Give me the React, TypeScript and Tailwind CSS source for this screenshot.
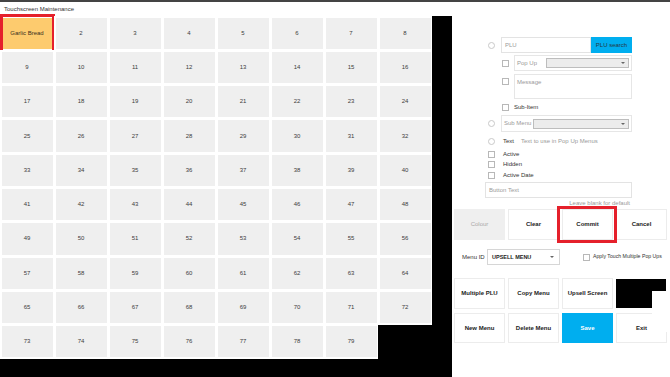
import React from "react";

const font = { fontFamily: '"Liberation Sans", Arial, sans-serif' };

function Check() {
  return <span className="block h-[7px] w-[7px] shrink-0 border border-[#b8b8b8] bg-white" />;
}

function Radio() {
  return <span className="block h-[7px] w-[7px] shrink-0 rounded-full border border-[#c9c9c9] bg-white" />;
}

function Arrow() {
  return <span className="block h-0 w-0 border-x-[2px] border-t-[2px] border-x-transparent border-t-[#666]" />;
}

function Select({ w }: { w: string }) {
  return (
    <div className={`flex h-[10px] items-center justify-end border border-[#bdbdbd] bg-[#ececec] pr-[3px] ${w}`}>
      <Arrow />
    </div>
  );
}

function Btn({ label, tone = "plain" }: { label: string; tone?: "plain" | "muted" | "blue" }) {
  const look =
    tone === "blue"
      ? "bg-[#00aeef] text-white border-[#00aeef]"
      : tone === "muted"
        ? "bg-[#efefef] text-[#a9a9a9] font-normal border-[#efefef]"
        : "bg-white text-[#222] border-[#ececec]";
  return (
    <div className={`flex h-full w-[51px] items-center justify-center whitespace-nowrap border-[1.5px] font-bold ${look}`}>
      {label}
    </div>
  );
}

export default function App() {
  const cells = Array.from({ length: 79 }, (_, i) => (i === 0 ? "Garlic Bread" : String(i + 1)));

  return (
    <div style={font} className="relative flex h-[377px] w-[670px] flex-col overflow-hidden bg-white text-[6px] text-[#333]">
      <div className="h-[2px] bg-[#444]" />
      <div className="flex h-[14px] items-center pl-[4px] text-[6px] text-[#333]">Touchscreen Maintenance</div>

      <div className="flex flex-1">
        {/* button grid */}
        <div className="w-[452px] shrink-0 bg-black">
          <div className="flex w-[432px] flex-wrap content-start">
            {cells.map((c, i) => (
              <div key={c} className="relative h-[34.3px] w-[54px] bg-white p-[1.5px]">
                <div
                  className={`flex h-full w-full items-center justify-center ${
                    i === 0 ? "bg-[#fdcb6e] text-[#3a3020]" : "bg-[#efefef] text-[#3c3c3c]"
                  }`}
                >
                  {c}
                </div>
                {i === 0 && (
                  <div className="absolute -bottom-[4px] -right-[1px] -top-[2px] left-0 border-[3px] border-[#e5202b]" />
                )}
              </div>
            ))}
          </div>
        </div>

        {/* editor panel */}
        <div className="flex min-w-0 flex-1 flex-col bg-white">
          <div className="mt-[21px] flex h-[16px] items-center pl-[36px]">
            <Radio />
            <div className="ml-[6px] flex h-full w-[90px] items-center border border-[#e3e3e3] pl-[3px] text-[#9a9a9a]">PLU</div>
            <div className="flex h-full w-[41px] items-center justify-center bg-[#00aeef] text-[#253844]">PLU search</div>
          </div>

          <div className="mt-[2px] flex h-[16px] items-center pl-[50px]">
            <Check />
            <div className="ml-[5px] flex h-full w-[118px] items-center border border-[#e6e6e6] pl-[2px]">
              <span className="w-[29px] text-[#9a9a9a]">Pop Up</span>
              <Select w="w-[83px]" />
            </div>
          </div>

          <div className="mt-[3px] flex h-[25px] items-start pl-[50px]">
            <span className="mt-[4px]">
              <Check />
            </span>
            <div className="ml-[5px] h-full w-[118px] border border-[#e6e6e6] pl-[2px] pt-[3px] text-[#9a9a9a]">Message</div>
          </div>

          <div className="mt-[4px] flex h-[8px] items-center pl-[50px]">
            <Check />
            <span className="ml-[5px]">Sub-Item</span>
          </div>

          <div className="mt-[4px] flex h-[17px] items-center pl-[36px]">
            <Radio />
            <div className="ml-[6px] flex h-full w-[131px] items-center border border-[#e6e6e6] pl-[2px]">
              <span className="w-[29px] text-[#9a9a9a]">Sub Menu</span>
              <Select w="w-[96px]" />
            </div>
          </div>

          <div className="mt-[5px] flex h-[8px] items-center pl-[36px]">
            <Radio />
            <span className="ml-[8px]">Text</span>
            <span className="ml-[7px] text-[#9a9a9a]">Text to use in Pop Up Menus</span>
          </div>

          {["Active", "Hidden", "Active Date"].map((l, i) => (
            <div key={l} className={`flex h-[8px] items-center pl-[36px] ${i === 0 ? "mt-[5px]" : "mt-[2.7px]"}`}>
              <Check />
              <span className="ml-[8px]">{l}</span>
            </div>
          ))}

          <div className="ml-[33px] mt-[3px] flex h-[16px] w-[147px] items-center border border-[#e3e3e3] pl-[3px] text-[#9a9a9a]">
            Button Text
          </div>

          <div className="mt-[1px] flex h-[8px] items-center justify-end pr-[40px] text-[#9a9a9a]">Leave blank for default</div>

          <div className="mt-[2px] flex h-[31px] gap-[3px] pl-[2px]">
            <Btn label="Colour" tone="muted" />
            <Btn label="Clear" />
            <div className="relative h-full">
              <Btn label="Commit" />
              <div className="absolute -bottom-[3px] -left-[5px] -right-[4px] -top-[3px] border-[3px] border-[#e5202b]" />
            </div>
            <Btn label="Cancel" />
          </div>

          <div className="mt-[9px] flex h-[16px] items-center whitespace-nowrap pl-[10px]">
            <span className="w-[25px]">Menu ID</span>
            <div className="flex h-full w-[73px] items-center justify-between border border-[#d6d6d6] pl-[4px] pr-[5px] font-bold text-[#222]">
              <span className="text-[5.5px]">UPSELL MENU</span>
              <Arrow />
            </div>
            <span className="ml-[23px]">
              <Check />
            </span>
            <span className="ml-[3px] text-[5.2px]">Apply Touch Multiple Pop Ups</span>
          </div>

          <div className="mt-[13px] flex h-[31px] gap-[3px] pl-[2px]">
            <Btn label="Multiple PLU" />
            <Btn label="Copy Menu" />
            <Btn label="Upsell Screen" />
            <div className="mt-[1px] h-[29px] w-[50px] bg-black" />
          </div>

          <div className="mt-[4px] flex h-[30px] gap-[3px] pl-[2px]">
            <Btn label="New Menu" />
            <Btn label="Delete Menu" />
            <Btn label="Save" tone="blue" />
            <Btn label="Exit" />
          </div>
        </div>
      </div>

      {/* stray white pane over the corner */}
      <div className="absolute left-[652px] top-[291px] h-[41px] w-[18px] bg-white" />
    </div>
  );
}
